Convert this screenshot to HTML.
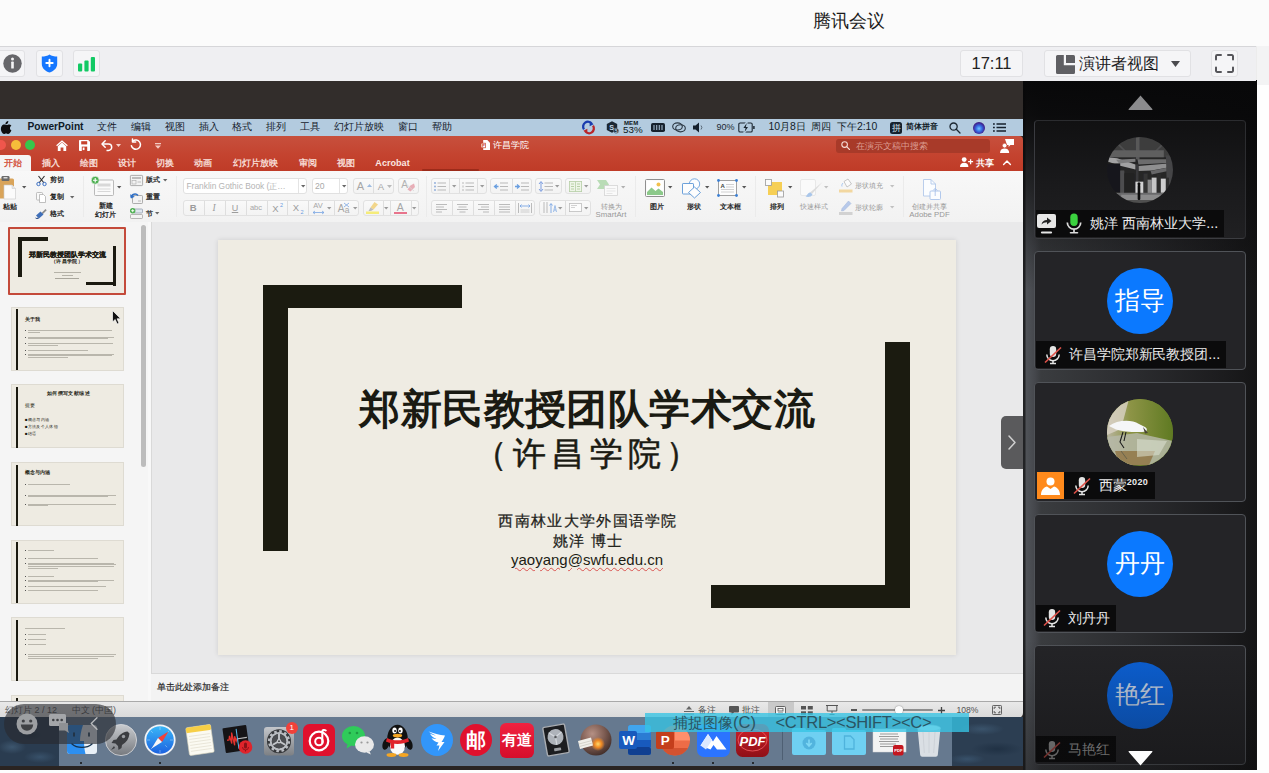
<!DOCTYPE html>
<html lang="zh">
<head>
<meta charset="utf-8">
<title>腾讯会议</title>
<style>
*{box-sizing:border-box;margin:0;padding:0}
html,body{width:1269px;height:773px;overflow:hidden;background:#fcfcfc}
body{position:relative;font-family:"Liberation Sans",sans-serif;color:#111}
.abs,.abs-c>*{position:absolute}
.nw{white-space:nowrap}
svg{display:block;overflow:visible}
/* ---------- Tencent Meeting chrome ---------- */
#titlebar{left:0;top:0;width:1269px;height:46px;background:#fbfbfb}
#titlebar .t{left:813px;top:9px;font-size:18px;line-height:24px;color:#1a1a1a;white-space:nowrap}
#toolbar{z-index:3;left:0;top:46px;width:1256px;height:35px;background:#efeff2;border-top:1px solid #d6d6d9}
.tbtn{height:27px;background:#f5f5f7;border:1px solid #e1e1e4;border-radius:3px}
#rightstrip{left:1256px;top:46px;width:13px;height:727px;background:linear-gradient(#f3f3f4 0,#f3f3f4 39px,#fefefe 39px);border-left:1px solid #ececec}
#bottomstrip{left:0;top:770px;width:1269px;height:3px;background:#fdfdfd}
/* ---------- shared screen ---------- */
#share{left:0;top:80px;width:1023px;height:690px;background:#322d2b;overflow:hidden}
#macbar{left:0;top:39px;width:1023px;height:16.5px;background:#b3cbdf;font-size:11px;color:#16202b}
#macbar .mi{top:0;line-height:16.5px;white-space:nowrap;font-size:10.4px;margin-left:1px;transform:translateX(-50%)}
#ppthead{left:0;top:55.5px;width:1023px;height:35.5px;border-radius:0 4px 0 0;background:linear-gradient(#c7503d,#c4432f 55%,#bf3b27)}
#ppthead .tab{top:19px;line-height:16px;font-size:9.1px;color:#fbe6e0;white-space:nowrap;transform:translateX(-50%);-webkit-text-stroke:.25px #fbe6e0}
#ribbon{left:0;top:91px;width:1023px;height:51.5px;background:linear-gradient(#f8f8f8,#f2f2f2);border-bottom:1px solid #d6d6d6}
.rg{background:linear-gradient(#f9f9f9,#f3f3f3);border:1px solid #e1e1e1;border-radius:3px;height:16px}
.rl{font-size:8.5px;line-height:10px;color:#161616;white-space:nowrap;transform:translateX(-50%);text-align:center;-webkit-text-stroke:.25px #161616}
.rl.dim{color:#989898;-webkit-text-stroke:0}
#content{left:0;top:142px;width:1023px;height:479px;background:#e9e9ea}
#thumbs{left:0;top:0;width:151px;height:479px;background:#f5f5f5;overflow:hidden}
.th{left:12px;width:112px;height:63px;background:#eeebe2;border:1px solid #dedbd2}
.th i{position:absolute;display:block;background:#1b1a10}
.th b{position:absolute;display:block;background:#8f8d86;height:1px}
#slide{left:218px;top:18px;width:738px;height:415px;background:#efece3;box-shadow:0 0 5px rgba(0,0,0,.12)}
#slide .blk{background:#1b1b10}
#notes{left:151px;top:451px;width:872px;height:28px;background:#f3f3f3;border-top:1px solid #d9d9d9}
#status{left:0;top:621px;width:1023px;height:17px;background:linear-gradient(#e9e9e9,#d9d9d9);border-top:1px solid #a9a9a9;font-size:10px;color:#555;border-radius:0 0 5px 0}
#desk{left:0;top:637px;width:1023px;height:49px;background:#2a3c50;z-index:0}
#dock{left:59px;top:637px;width:893px;height:49px;background:#66798f}
#deskbot{left:0;top:686px;width:1023px;height:4px;background:#2a2422}
.di{top:646px;width:30px;height:30px}
/* ---------- participants ---------- */
#side{left:1023px;top:80px;width:233.5px;height:690px;background:linear-gradient(to right,#222325 0,#222325 2.2px,#505358 2.8px,#4b4e53 7px,#45474c 12px,#3a3c3f 18px,#2c2d30 45%,#1c1c1e 85%,#151516 100%);overflow:hidden}
.card{left:10.8px;width:212.2px;height:119.5px;border:1.5px solid #505358;border-radius:4px;background:#242427}
.av{left:72px;top:16px;width:66.5px;height:66.5px;border-radius:50%;background:#0b79ff;color:#fff;font-size:24.5px;line-height:66px;text-align:center;white-space:nowrap}
.nm{left:2px;top:91px;height:26.5px;background:#0b0b0c;white-space:nowrap}
</style>
</head>
<body>
<div id="titlebar" class="abs"><div class="t abs">腾讯会议</div></div>
<div id="toolbar" class="abs">
  <div class="tbtn abs" style="left:-3px;top:3px;width:28px">
    <svg class="abs" style="left:5px;top:3px" width="19" height="19" viewBox="0 0 19 19"><circle cx="9.5" cy="9.5" r="9.2" fill="#66666a"/><circle cx="9.5" cy="5" r="1.5" fill="#f4f4f6"/><rect x="8.2" y="7.6" width="2.6" height="7" rx=".6" fill="#f4f4f6"/></svg>
  </div>
  <div class="tbtn abs" style="left:36px;top:3px;width:27px">
    <svg class="abs" style="left:4px;top:3px" width="17" height="19" viewBox="0 0 17 19"><path d="M8.5 .6C6.6 2.1 3.6 2.6.8 2.6v7.1c0 4.6 3.4 7.3 7.7 8.8 4.3-1.500 7.700-4.200 7.700-8.800V2.600C13.400 2.600 10.400 2.100 8.500.600z" fill="#1677ff"/><path d="M8.500 5.800v6.400M5.300 9h6.400" stroke="#fff" stroke-width="1.900" stroke-linecap="round"/></svg>
  </div>
  <div class="tbtn abs" style="left:73px;top:3px;width:27px">
    <svg class="abs" style="left:4px;top:6px" width="18" height="15" viewBox="0 0 18 15"><rect x="0" y="6.6" width="4.2" height="8" rx="1" fill="#12c964"/><rect x="6.4" y="3.6" width="4.2" height="11" rx="1" fill="#12c964"/><rect x="12.8" y="0" width="4.2" height="14.600" rx="1" fill="#12c964"/></svg>
  </div>
  <div class="tbtn abs nw" style="left:960px;top:3px;width:63px;font-size:16.500px;line-height:25px;text-align:center;color:#222">17:11</div>
  <div class="tbtn abs" style="left:1044px;top:3px;width:147px">
    <svg class="abs" style="left:11px;top:4px" width="19" height="19" viewBox="0 0 19 19"><path d="M1.500 0h6.300v10.300H19v7.200a1.500 1.500 0 0 1-1.500 1.500h-16A1.500 1.500 0 0 1 0 17.500v-16A1.500 1.500 0 0 1 1.500 0z" fill="#5f5f63"/><path d="M10 0h7.500A1.500 1.500 0 0 1 19 1.500V8h-9z" fill="#5f5f63"/></svg>
    <div class="abs nw" style="left:34px;top:0;font-size:16px;line-height:25px;color:#1d1d1f">演讲者视图</div>
    <svg class="abs" style="left:126px;top:10px" width="9" height="6" viewBox="0 0 9 6"><path d="M0 0h9L4.500 6z" fill="#4a4a4e"/></svg>
  </div>
  <div class="tbtn abs" style="left:1211px;top:3px;width:27px">
    <svg class="abs" style="left:3px;top:3px" width="19" height="19" viewBox="0 0 19 19" fill="none" stroke="#55555a" stroke-width="2" stroke-linecap="round" stroke-linejoin="round"><path d="M1 5.500V2.200A1.200 1.200 0 0 1 2.200 1H6M13 1h3.800A1.200 1.200 0 0 1 18 2.200V5.500M18 13.500v3.300a1.200 1.200 0 0 1-1.200 1.200H13M6 18H2.200A1.200 1.200 0 0 1 1 16.800V13.500"/></svg>
  </div>
</div>
<div id="rightstrip" class="abs"></div>
<div id="share" class="abs">
<div id="macbar" class="abs">
  <svg class="abs" style="left:1px;top:2px" width="11" height="13" viewBox="0 0 11 13"><path d="M7.300 0c.100 1-.300 1.800-.800 2.400-.600.600-1.300 1-2.100.900-.100-.900.300-1.700.800-2.300C5.800.400 6.600 0 7.300 0zM10.400 9.300c-.300.800-.700 1.500-1.200 2.200-.500.700-1.100 1.500-2 1.500-.800 0-1.100-.500-2.100-.500s-1.300.500-2.100.500c-.900 0-1.500-.800-2-1.500C-.300 9.500-.600 6.500.700 4.900c.700-.900 1.700-1.400 2.600-1.400 1 0 1.600.500 2.400.500s1.300-.500 2.400-.500c.800 0 1.700.400 2.300 1.200-2 1.100-1.700 4 0 4.600z" fill="#0d0d0f"/></svg>
  <div class="mi abs" style="left:54.5px;font-weight:bold;font-size:10.2px;color:#0e1a26">PowerPoint</div>
  <div class="mi abs" style="left:106px">文件</div>
  <div class="mi abs" style="left:140px">编辑</div>
  <div class="mi abs" style="left:174px">视图</div>
  <div class="mi abs" style="left:207.5px">插入</div>
  <div class="mi abs" style="left:241px">格式</div>
  <div class="mi abs" style="left:275px">排列</div>
  <div class="mi abs" style="left:309px">工具</div>
  <div class="mi abs" style="left:358px">幻灯片放映</div>
  <div class="mi abs" style="left:407px">窗口</div>
  <div class="mi abs" style="left:441px">帮助</div>
  <!-- right status items -->
  <svg class="abs" style="left:582px;top:2px" width="13" height="13" viewBox="0 0 13 13" fill="none" stroke-width="2.300"><path d="M2 8.300A4.700 4.700 0 0 1 9.800 2.800" stroke="#1a3cae"/><path d="M11 4.700A4.700 4.700 0 0 1 3.200 10.200" stroke="#b9262a"/><path d="M7.800 .300 11.600 3.300 7.600 5.200z" fill="#1a3cae" stroke="none"/><path d="M5.200 12.700 1.400 9.700 5.400 7.800z" fill="#b9262a" stroke="none"/></svg>
  <svg class="abs" style="left:606px;top:2px" width="13" height="13" viewBox="0 0 13 13"><path d="M6 .300 11.200 3.100v5.800L6 11.700.800 8.900V3.100z" fill="#1b2733"/><text x="3.300" y="8.700" font-size="7.200" font-weight="bold" fill="#c4d8e8" font-family="Liberation Sans">S</text><circle cx="10.200" cy="9.800" r="2.600" fill="#1b2733" stroke="#b3cbdf" stroke-width=".5"/><text x="8.900" y="11.500" font-size="4.500" font-weight="bold" fill="#c4d8e8" font-family="Liberation Sans">5</text></svg>
  <div class="abs nw" style="left:624px;top:1px;font-size:6px;line-height:6px;font-weight:bold;color:#0e1720;letter-spacing:.1px">MEM</div>
  <div class="abs nw" style="left:623px;top:6px;font-size:9.800px;line-height:10px;color:#0e1720">53%</div>
  <svg class="abs" style="left:651px;top:4px" width="14" height="9" viewBox="0 0 14 9"><rect x="0" y="0" width="14" height="9" rx="1.800" fill="#16212d"/><path d="M3 2v5M5.700 2v5M8.300 2v5M11 2v5" stroke="#9fb6c9" stroke-width="1.100"/></svg>
  <svg class="abs" style="left:672px;top:3px" width="14" height="11" viewBox="0 0 14 11" fill="none" stroke="#2a3642" stroke-width="1.100"><ellipse cx="5.500" cy="4.500" rx="4.800" ry="3.600"/><ellipse cx="8.500" cy="6.300" rx="4.800" ry="3.600"/></svg>
  <svg class="abs" style="left:693px;top:3px" width="12" height="11" viewBox="0 0 12 11"><path d="M0 3.500h2.500L6 .500v10L2.500 7.500H0z" fill="#16212d"/><path d="M8 3.500a3 3 0 0 1 0 4" stroke="#5a6a78" stroke-width="1" fill="none"/></svg>
  <div class="abs nw" style="left:716.500px;top:0;font-size:9px;line-height:16.500px;color:#1c2732">90%</div>
  <svg class="abs" style="left:738px;top:3px" width="17" height="11" viewBox="0 0 17 11" fill="none" stroke="#1c2732" stroke-width="1.100"><rect x=".8" y="1" width="13.400" height="9" rx="1.300"/><path d="M15.900 4v3" stroke-width="1.500"/><path d="M9 -.300 4.600 6.300h2.600L6 11.300 10.400 4.700H7.800z" fill="#b3cbdf" stroke="#b3cbdf" stroke-width="1.600"/><path d="M8.800 .900 5.400 6h2.200L6.600 10.100 10 4.900H7.800z" fill="#1c2732" stroke="none"/></svg>
  <div class="abs nw" style="left:768.500px;top:0;font-size:10.450px;line-height:16.500px;color:#121c27;word-spacing:2.600px">10月8日 周四 下午2:10</div>
  <div class="abs" style="left:890px;top:2.500px;width:12px;height:12px;border-radius:2.500px;background:#15202c;color:#d9e6f1;font-size:8.500px;line-height:12px;text-align:center">拼</div>
  <div class="abs nw" style="left:905.500px;top:0;font-size:8px;line-height:16.500px;color:#121c27;font-weight:bold">简体拼音</div>
  <svg class="abs" style="left:949px;top:3px" width="12" height="12" viewBox="0 0 12 12" fill="none" stroke="#1c2732" stroke-width="1.300"><circle cx="4.600" cy="4.600" r="3.600"/><path d="M7.300 7.300 11 11" stroke-linecap="round"/></svg>
  <div class="abs" style="left:972.500px;top:2.500px;width:12px;height:12px;border-radius:50%;background:radial-gradient(circle at 50% 55%,#6ec6ff 0,#3567e0 35%,#40208e 65%,#161038 100%)"></div>
  <svg class="abs" style="left:993px;top:4px" width="13" height="9" viewBox="0 0 13 9" stroke="#16212d" stroke-width="1.500"><path d="M0 1h1.800M3.500 1H13M0 4.500h1.800M3.500 4.500H13M0 8h1.800M3.500 8H13"/></svg>
</div>
<div id="ppthead" class="abs">
  <!-- traffic lights -->
  <div class="abs" style="left:-4px;top:4.500px;width:10px;height:10px;border-radius:50%;background:#f0564c"></div>
  <div class="abs" style="left:10.500px;top:4.500px;width:10px;height:10px;border-radius:50%;background:#f6bd3a"></div>
  <div class="abs" style="left:25px;top:4.500px;width:10px;height:10px;border-radius:50%;background:#37c64b"></div>
  <!-- quick access -->
  <svg class="abs" style="left:55.500px;top:4px" width="12" height="11" viewBox="0 0 12 11"><path d="M6 .300.200 5.300l.800.900L6 1.900l5 4.300.800-.900z" fill="#fff"/><path d="M1.800 6.200 6 2.600l4.200 3.600V11H7.400V7.600H4.600V11H1.800z" fill="#fff"/></svg>
  <svg class="abs" style="left:79px;top:4px" width="11" height="11" viewBox="0 0 11 11"><path d="M.800 0h8.400L11 1.800v8.400a.800.800 0 0 1-.800.800H.800a.800.800 0 0 1-.800-.800V.800A.800.800 0 0 1 .800 0z" fill="#fff"/><rect x="2.200" y="1.200" width="6" height="3.200" fill="#c6422d"/><rect x="2.800" y="6.600" width="5.400" height="4.400" fill="#c6422d"/><rect x="3.700" y="7.500" width="1.800" height="2.600" fill="#fff"/></svg>
  <svg class="abs" style="left:101px;top:4px" width="12" height="11" viewBox="0 0 12 11" fill="none" stroke="#fff" stroke-width="1.500"><path d="M1.200 4h6.300a3.200 3.200 0 0 1 0 6.400H5.500"/><path d="M4.200.800 1 4l3.200 3.200" stroke-linejoin="round" stroke-linecap="round"/></svg>
  <svg class="abs" style="left:116px;top:8.500px" width="5" height="3" viewBox="0 0 5 3"><path d="M0 0h5L2.500 3z" fill="#f6d3cc"/></svg>
  <svg class="abs" style="left:129.500px;top:3.500px" width="12" height="12" viewBox="0 0 12 12" fill="none" stroke="#fff" stroke-width="1.500"><path d="M2.700 2.300A4.600 4.600 0 1 1 1.400 6.800" stroke-linecap="round"/><path d="M5.700 2.900H2.500V-.100" stroke-linejoin="round" stroke-linecap="round"/></svg>
  <svg class="abs" style="left:155px;top:7px" width="6" height="6" viewBox="0 0 6 6"><path d="M0 0h6v1.200H0zM0 2.600h6L3 5.800z" fill="#f3c9c1"/></svg>
  <!-- document title -->
  <svg class="abs" style="left:481px;top:4.500px" width="9" height="10" viewBox="0 0 9 10"><path d="M2.200 0H6.300L9 2.700V10H2.200z" fill="#fff"/><rect x="0" y="3.200" width="4.600" height="4.600" fill="#fff" stroke="#c6422d" stroke-width=".7"/><text x=".9" y="7.200" font-size="4.400" font-weight="bold" fill="#c6422d" font-family="Liberation Sans">P</text></svg>
  <div class="abs nw" style="left:493px;top:2px;font-size:9.300px;line-height:15px;color:#fff">许昌学院</div>
  <!-- search -->
  <div class="abs" style="left:835.500px;top:3px;width:154px;height:14px;border-radius:3px;background:#a83a29">
    <svg class="abs" style="left:5px;top:2.500px" width="9" height="9" viewBox="0 0 9 9" fill="none" stroke="#f7dcd6" stroke-width="1.100"><circle cx="3.600" cy="3.600" r="2.800"/><path d="M5.700 5.700 8.500 8.500" stroke-linecap="round"/></svg>
    <div class="abs nw" style="left:20px;top:0;font-size:8.700px;line-height:14px;color:#dc9d91">在演示文稿中搜索</div>
  </div>
  <svg class="abs" style="left:1000px;top:3px" width="14" height="14" viewBox="0 0 14 14"><path d="M5 0h9v6h-3.600L8.600 8V6H7z" fill="#fff"/><circle cx="4.600" cy="6.600" r="2.300" fill="#fff" stroke="#c6422d" stroke-width=".6"/><path d="M0 14c0-3 2-4.400 4.600-4.400S9.200 11 9.200 14z" fill="#fff"/></svg>
  <!-- tabs -->
  <div class="abs" style="left:0;top:19px;width:31px;height:16px;background:#f5f5f5;border-radius:0 3px 0 0"></div>
  <div class="tab abs" style="left:13px;color:#d2462f;-webkit-text-stroke:.25px #d2462f">开始</div>
  <div class="tab abs" style="left:50.500px">插入</div>
  <div class="tab abs" style="left:88.500px">绘图</div>
  <div class="tab abs" style="left:126.500px">设计</div>
  <div class="tab abs" style="left:165px">切换</div>
  <div class="tab abs" style="left:203px">动画</div>
  <div class="tab abs" style="left:255.500px">幻灯片放映</div>
  <div class="tab abs" style="left:308px">审阅</div>
  <div class="tab abs" style="left:346px">视图</div>
  <div class="tab abs" style="left:392.500px;font-weight:bold;-webkit-text-stroke:0">Acrobat</div>
  <div class="abs" style="left:422px;top:33px;width:57px;height:2px;background:#932717;border-radius:1px;opacity:.8"></div>
  <!-- share -->
  <svg class="abs" style="left:960px;top:21.500px" width="13" height="10" viewBox="0 0 13 10"><circle cx="4.200" cy="2.600" r="2.400" fill="#fff"/><path d="M0 10c0-3 1.800-4.300 4.200-4.300S8.400 7 8.400 10z" fill="#fff"/><path d="M10.600 2.200v5M8.100 4.700h5" stroke="#fff" stroke-width="1.300"/></svg>
  <div class="abs nw" style="left:976px;top:19px;font-size:9px;line-height:16px;color:#fff;font-weight:bold">共享</div>
  <svg class="abs" style="left:1003px;top:24px" width="8" height="5" viewBox="0 0 8 5" fill="none" stroke="#fff" stroke-width="1.400"><path d="M.600 4.400 4 1l3.400 3.400" stroke-linecap="round" stroke-linejoin="round"/></svg>
</div>
<div id="ribbon" class="abs">
<svg class="abs" style="left:-3px;top:5px" width="19" height="23" viewBox="0 0 19 23"><rect x="0" y="2.500" width="17" height="20" rx="1.500" fill="#d9a45a"/><rect x="4.500" y="0" width="8" height="5" rx="1.200" fill="#6b6b6b"/><rect x="6.500" y="1" width="4" height="1.500" fill="#d9d9d9"/><path d="M7 9h8l3.500 3.500V23H7z" fill="#fbfbfb" stroke="#c9c9c9" stroke-width=".6"/><path d="M15 9v3.500h3.500" fill="#e6e6e6" stroke="#c9c9c9" stroke-width=".5"/></svg>
<svg class="abs" style="left:21.8px;top:15.2px" width="4.4" height="2.6" viewBox="0 0 5 3"><path d="M0 0h5L2.500 3z" fill="#555"/></svg>
<div class="rl abs " style="left:10.3px;top:31.30000000000001px;font-size:7.4px">粘贴</div>
<svg class="abs" style="left:35.5px;top:4.5px" width="11" height="10" viewBox="0 0 11 10"><path d="M2.500 0 8 7M8.500 0 3 7" stroke="#333" stroke-width="1.200" fill="none"/><circle cx="2.500" cy="8" r="1.700" fill="none" stroke="#3a6fc4" stroke-width="1"/><circle cx="8.500" cy="8" r="1.700" fill="none" stroke="#3a6fc4" stroke-width="1"/></svg>
<div class="rl abs " style="left:50.3px;top:4.300000000000011px;font-size:7.4px;transform:none">剪切</div>
<svg class="abs" style="left:36px;top:21px" width="10" height="11" viewBox="0 0 10 11"><rect x=".5" y=".5" width="6" height="7.500" rx=".8" fill="#fafafa" stroke="#b0b0b0" stroke-width=".8"/><path d="M3.500 2.500h4L9.500 4.500V10.500H3.500z" fill="#fff" stroke="#b0b0b0" stroke-width=".8"/></svg>
<div class="rl abs " style="left:50.3px;top:21px;font-size:7.4px;transform:none">复制</div>
<svg class="abs" style="left:69.8px;top:24.899999999999988px" width="4.4" height="2.6" viewBox="0 0 5 3"><path d="M0 0h5L2.500 3z" fill="#666"/></svg>
<svg class="abs" style="left:35px;top:37.5px" width="12" height="10" viewBox="0 0 12 10"><path d="M6.500 4 10.500 0l1.200 1.200L7.700 5.200z" fill="#8a8a8a"/><path d="M1 6.500 5.500 2.500l3 3L4 9.500z" fill="#3f6fb8"/><path d="M0 8.500c1 .5 2.200.5 3 0l1 1C3 10.300 1 10.300 0 8.500z" fill="#2c4e87"/></svg>
<div class="rl abs " style="left:50.3px;top:37.5px;font-size:7.4px;transform:none">格式</div>
<div class="abs" style="left:83px;top:5px;width:1px;height:41px;background:#ebebeb"></div>
<svg class="abs" style="left:90.5px;top:5px" width="23" height="20" viewBox="0 0 23 20"><rect x="3.500" y="4" width="19" height="15.500" rx="1" fill="#fafafa" stroke="#a9a9a9" stroke-width=".8"/><rect x="6.500" y="7.500" width="13" height="3" fill="#d8d8d8"/><path d="M6.500 13h13M6.500 15.500h13" stroke="#cfcfcf" stroke-width=".8"/><circle cx="4.200" cy="4.200" r="4" fill="#4caf50" stroke="#f5f5f5" stroke-width=".7"/><path d="M4.200 2v4.400M2 4.200h4.400" stroke="#fff" stroke-width="1.100"/></svg>
<svg class="abs" style="left:117.3px;top:15.2px" width="4.4" height="2.6" viewBox="0 0 5 3"><path d="M0 0h5L2.500 3z" fill="#555"/></svg>
<div class="rl abs " style="left:105.5px;top:30.400000000000006px;font-size:7.4px">新建</div>
<div class="rl abs " style="left:105.5px;top:39px;font-size:7.4px">幻灯片</div>
<svg class="abs" style="left:129.5px;top:4px" width="13" height="11" viewBox="0 0 13 11"><rect x=".4" y=".4" width="12.200" height="10.200" rx=".8" fill="#f3f3f3" stroke="#9a9a9a" stroke-width=".8"/><rect x="2" y="2" width="9" height="2" fill="#bdbdbd"/><rect x="2" y="5.500" width="4" height="3.500" fill="none" stroke="#a9a9a9" stroke-width=".6"/><path d="M7.500 7h3.500" stroke="#a9a9a9" stroke-width=".7"/></svg>
<div class="rl abs " style="left:146px;top:4.300000000000011px;font-size:7.4px;transform:none">版式</div>
<svg class="abs" style="left:163.4px;top:8.00000000000001px" width="4.4" height="2.6" viewBox="0 0 5 3"><path d="M0 0h5L2.500 3z" fill="#666"/></svg>
<svg class="abs" style="left:129.5px;top:20.5px" width="13" height="12" viewBox="0 0 13 12"><rect x="2.500" y="3.500" width="10" height="8" rx=".8" fill="#f3f3f3" stroke="#9a9a9a" stroke-width=".8"/><path d="M8 9h3" stroke="#a9a9a9" stroke-width=".8"/><path d="M1.200 5.500A3.800 3.800 0 0 1 8 3.500" fill="none" stroke="#2f6fc6" stroke-width="1.500"/><path d="M0 2.200 1 6.500 4.800 4.800z" fill="#2f6fc6"/></svg>
<div class="rl abs " style="left:146px;top:21px;font-size:7.4px;transform:none">重置</div>
<svg class="abs" style="left:129.5px;top:37px" width="13" height="11" viewBox="0 0 13 11"><rect x="3.500" y="1" width="9" height="4" rx=".8" fill="#dfe6ef" stroke="#8a97a8" stroke-width=".7"/><rect x=".5" y="6.500" width="12" height="4" rx=".8" fill="#f3f3f3" stroke="#9a9a9a" stroke-width=".7"/><circle cx="2.700" cy="2.700" r="2.700" fill="#4caf50"/><path d="M2.700 1.200v3M1.200 2.700h3" stroke="#fff" stroke-width=".9"/></svg>
<div class="rl abs " style="left:146px;top:37.5px;font-size:7.4px;transform:none">节</div>
<svg class="abs" style="left:155.3px;top:41.39999999999999px" width="4.4" height="2.6" viewBox="0 0 5 3"><path d="M0 0h5L2.500 3z" fill="#666"/></svg>
<div class="abs" style="left:176px;top:5px;width:1px;height:41px;background:#ebebeb"></div>
<div class="rg abs" style="left:183px;top:7px;width:124px;height:15.5px;background:#fff"></div>
<div class="rl abs" style="left:186.5px;top:10px;font-size:8.4px;color:#b4b4b4;-webkit-text-stroke:0;transform:none">Franklin Gothic Book (正…</div>
<div class="abs" style="left:297.5px;top:8px;width:1px;height:13.5px;background:#e4e4e4"></div>
<svg class="abs" style="left:300.6px;top:13.7px" width="4.4" height="2.6" viewBox="0 0 5 3"><path d="M0 0h5L2.500 3z" fill="#666"/></svg>
<div class="rg abs" style="left:311.5px;top:7px;width:36.5px;height:15.5px;background:#fff"></div>
<div class="rl abs " style="left:315px;top:10px;font-size:8.6px;color:#a9a9a9;-webkit-text-stroke:0;transform:none">20</div>
<div class="abs" style="left:339px;top:8px;width:1px;height:13.5px;background:#e4e4e4"></div>
<svg class="abs" style="left:341.6px;top:13.7px" width="4.4" height="2.6" viewBox="0 0 5 3"><path d="M0 0h5L2.500 3z" fill="#666"/></svg>
<div class="rg abs" style="left:352.5px;top:7px;width:41.5px;height:15.5px;"></div>
<div class="abs" style="left:373px;top:8px;width:1px;height:13.5px;background:#dedede"></div>
<div class="abs nw" style="left:360.5px;top:9px;line-height:12px;font-size:11px;color:#a6a6a6;transform:translateX(-50%);">A</div>
<svg class="abs" style="left:366.5px;top:12.5px" width="5" height="3" viewBox="0 0 5 3"><path d="M0 3h5L2.500 0z" fill="#9dbbe0"/></svg>
<div class="abs nw" style="left:381px;top:9.5px;line-height:12px;font-size:9.5px;color:#a6a6a6;transform:translateX(-50%);">A</div>
<svg class="abs" style="left:386.5px;top:14px" width="5" height="3" viewBox="0 0 5 3"><path d="M0 0h5L2.500 3z" fill="#b9b9b9"/></svg>
<div class="rg abs" style="left:397.5px;top:7px;width:21.0px;height:15.5px;"></div>
<div class="abs nw" style="left:404.5px;top:7.5px;line-height:12px;font-size:10px;color:#b0b0b0;transform:translateX(-50%);">A</div>
<svg class="abs" style="left:405px;top:11px" width="10" height="10" viewBox="0 0 10 10"><path d="M5.500 3.500 9 1.500 10 5 5.500 9.500 2.500 7.500z" fill="#e7a6b0" opacity=".9"/><path d="M0 1l9 8" stroke="#d8d8d8" stroke-width=".8"/></svg>
<div class="rg abs" style="left:183px;top:29px;width:176px;height:15.5px;"></div>
<div class="abs" style="left:203.5px;top:30px;width:1px;height:13.5px;background:#dedede"></div>
<div class="abs" style="left:224.5px;top:30px;width:1px;height:13.5px;background:#dedede"></div>
<div class="abs" style="left:245.5px;top:30px;width:1px;height:13.5px;background:#dedede"></div>
<div class="abs" style="left:266.5px;top:30px;width:1px;height:13.5px;background:#dedede"></div>
<div class="abs" style="left:287px;top:30px;width:1px;height:13.5px;background:#dedede"></div>
<div class="abs" style="left:308px;top:30px;width:1px;height:13.5px;background:#dedede"></div>
<div class="abs" style="left:333.5px;top:30px;width:1px;height:13.5px;background:#dedede"></div>
<div class="abs nw" style="left:193.3px;top:31px;line-height:12px;font-size:9.5px;color:#9c9c9c;transform:translateX(-50%);font-weight:bold">B</div>
<div class="abs nw" style="left:214px;top:31px;line-height:12px;font-size:9.5px;color:#9c9c9c;transform:translateX(-50%);font-style:italic;font-family:'Liberation Serif',serif">I</div>
<div class="abs nw" style="left:235px;top:31px;line-height:12px;font-size:9px;color:#9c9c9c;transform:translateX(-50%);text-decoration:underline">U</div>
<div class="abs nw" style="left:256px;top:31px;line-height:12px;font-size:7.5px;color:#a6a6a6;transform:translateX(-50%);">abc</div>
<div class="abs nw" style="left:275.5px;top:32px;line-height:12px;font-size:9.5px;color:#9c9c9c;transform:translateX(-50%);">X</div>
<div class="abs nw" style="left:281.5px;top:28px;line-height:12px;font-size:5.5px;color:#6b9be0;transform:translateX(-50%);">2</div>
<div class="abs nw" style="left:296px;top:30.5px;line-height:12px;font-size:9.5px;color:#9c9c9c;transform:translateX(-50%);">X</div>
<div class="abs nw" style="left:302px;top:34.5px;line-height:12px;font-size:5.5px;color:#6b9be0;transform:translateX(-50%);">2</div>
<div class="abs nw" style="left:318px;top:28.5px;line-height:12px;font-size:7.5px;color:#a6a6a6;transform:translateX(-50%);">AV</div>
<svg class="abs" style="left:312.5px;top:40px" width="11" height="3" viewBox="0 0 11 3"><path d="M0 1.500h11M2 0 0 1.500 2 3M9 0l2 1.500L9 3" fill="none" stroke="#7aa6e3" stroke-width=".8"/></svg>
<svg class="abs" style="left:326.8px;top:35.7px" width="4.4" height="2.6" viewBox="0 0 5 3"><path d="M0 0h5L2.500 3z" fill="#9a9a9a"/></svg>
<div class="abs nw" style="left:341px;top:31.5px;line-height:12px;font-size:10px;color:#a6a6a6;transform:translateX(-50%);">A</div>
<div class="abs nw" style="left:347px;top:32.5px;line-height:12px;font-size:8.5px;color:#a6a6a6;transform:translateX(-50%);">a</div>
<svg class="abs" style="left:343.5px;top:31.5px" width="5" height="4" viewBox="0 0 5 4"><path d="M0 0 5 4M5 0 0 4" stroke="#7aa6e3" stroke-width=".8"/></svg>
<svg class="abs" style="left:352.8px;top:35.7px" width="4.4" height="2.6" viewBox="0 0 5 3"><path d="M0 0h5L2.500 3z" fill="#9a9a9a"/></svg>
<div class="rg abs" style="left:363px;top:29px;width:55.5px;height:15.5px;"></div>
<div class="abs" style="left:382.5px;top:30px;width:1px;height:13.5px;background:#dedede"></div>
<div class="abs" style="left:390px;top:30px;width:1px;height:13.5px;background:#dedede"></div>
<div class="abs" style="left:410.5px;top:30px;width:1px;height:13.5px;background:#dedede"></div>
<svg class="abs" style="left:366px;top:31px" width="14" height="12" viewBox="0 0 14 12"><path d="M8.500 0 12 2.500 7.500 7.500 4.500 5.500z" fill="#f2d68b"/><path d="M4.500 5.500 7.500 7.500 5 9H2.500z" fill="#bdbdbd"/><rect x="0" y="9.500" width="13" height="2.500" fill="#f5ec7a"/></svg>
<svg class="abs" style="left:384.1px;top:35.7px" width="4.4" height="2.6" viewBox="0 0 5 3"><path d="M0 0h5L2.500 3z" fill="#9a9a9a"/></svg>
<div class="abs nw" style="left:400.3px;top:29.5px;line-height:12px;font-size:10.5px;color:#a6a6a6;transform:translateX(-50%);">A</div>
<div class="abs" style="left:394px;top:40.5px;width:13px;height:2.500px;background:#e8748c"></div>
<svg class="abs" style="left:412.3px;top:35.7px" width="4.4" height="2.6" viewBox="0 0 5 3"><path d="M0 0h5L2.500 3z" fill="#9a9a9a"/></svg>
<div class="abs" style="left:425.5px;top:5px;width:1px;height:41px;background:#ebebeb"></div>
<div class="rg abs" style="left:431px;top:7px;width:55.5px;height:15.5px;"></div>
<div class="abs" style="left:449px;top:8px;width:1px;height:13.5px;background:#dedede"></div>
<div class="abs" style="left:458.5px;top:8px;width:1px;height:13.5px;background:#dedede"></div>
<div class="abs" style="left:477px;top:8px;width:1px;height:13.5px;background:#dedede"></div>
<svg class="abs" style="left:434px;top:10.5px" width="12" height="9" viewBox="0 0 12 9"><circle cx="1" cy="1" r=".9" fill="#8aa9d8"/><circle cx="1" cy="4.500" r=".9" fill="#8aa9d8"/><circle cx="1" cy="8" r=".9" fill="#8aa9d8"/><path d="M3.500 1H12M3.500 4.500H12M3.500 8H12" stroke="#b9b9b9" stroke-width="1"/></svg>
<svg class="abs" style="left:451.6px;top:13.7px" width="4.4" height="2.6" viewBox="0 0 5 3"><path d="M0 0h5L2.500 3z" fill="#9a9a9a"/></svg>
<svg class="abs" style="left:462px;top:10.5px" width="12" height="9" viewBox="0 0 12 9"><path d="M3.500 1H12M3.500 4.500H12M3.500 8H12" stroke="#b9b9b9" stroke-width="1"/><path d="M1 0v2M1 3.500v2M1 7v2" stroke="#a9a9a9" stroke-width=".8"/></svg>
<svg class="abs" style="left:479.6px;top:13.7px" width="4.4" height="2.6" viewBox="0 0 5 3"><path d="M0 0h5L2.500 3z" fill="#9a9a9a"/></svg>
<div class="rg abs" style="left:490px;top:7px;width:41.5px;height:15.5px;"></div>
<div class="abs" style="left:511.5px;top:8px;width:1px;height:13.5px;background:#dedede"></div>
<svg class="abs" style="left:494px;top:10.5px" width="14" height="9" viewBox="0 0 14 9"><path d="M6 1h8M6 4.500h8M6 8h8" stroke="#b9b9b9" stroke-width="1"/><path d="M4.500 4.500H1M2.800 2.500 0.500 4.500l2.300 2" fill="none" stroke="#6a9fe0" stroke-width="1.300"/></svg>
<svg class="abs" style="left:514.5px;top:10.5px" width="14" height="9" viewBox="0 0 14 9"><path d="M6 1h8M6 4.500h8M6 8h8" stroke="#b9b9b9" stroke-width="1"/><path d="M0 4.500h3.800M2 2.500l2.300 2-2.300 2" fill="none" stroke="#6a9fe0" stroke-width="1.300"/></svg>
<div class="rg abs" style="left:535px;top:7px;width:26.5px;height:15.5px;"></div>
<svg class="abs" style="left:539px;top:9.5px" width="14" height="11" viewBox="0 0 14 11"><path d="M5.500 2H14M5.500 5.500H14M5.500 9H14" stroke="#b9b9b9" stroke-width="1"/><path d="M2 1v9M0 3 2 .500 4 3M0 8l2 2.500L4 8" fill="none" stroke="#7f9fe0" stroke-width="1"/></svg>
<svg class="abs" style="left:554.8px;top:13.7px" width="4.4" height="2.6" viewBox="0 0 5 3"><path d="M0 0h5L2.500 3z" fill="#9a9a9a"/></svg>
<div class="rg abs" style="left:565px;top:7px;width:26px;height:15.5px;"></div>
<svg class="abs" style="left:569px;top:9.5px" width="13" height="11" viewBox="0 0 13 11"><rect x=".4" y=".4" width="12.200" height="10.200" fill="#eef5e8" stroke="#b6cfa6" stroke-width=".8"/><path d="M6.500 .400v10.200" stroke="#b6cfa6" stroke-width=".8"/><path d="M2 3h3M2 5.500h3M2 8h3M8 3h3M8 5.500h3M8 8h3" stroke="#a9c795" stroke-width=".8"/></svg>
<svg class="abs" style="left:584.3px;top:13.7px" width="4.4" height="2.6" viewBox="0 0 5 3"><path d="M0 0h5L2.500 3z" fill="#9a9a9a"/></svg>
<div class="rg abs" style="left:431px;top:29px;width:104px;height:15.5px;"></div>
<div class="abs" style="left:452.3px;top:30px;width:1px;height:13.5px;background:#dedede"></div>
<div class="abs" style="left:473.4px;top:30px;width:1px;height:13.5px;background:#dedede"></div>
<div class="abs" style="left:494px;top:30px;width:1px;height:13.5px;background:#dedede"></div>
<div class="abs" style="left:514.8px;top:30px;width:1px;height:13.5px;background:#dedede"></div>
<svg class="abs" style="left:436px;top:32.5px" width="12" height="8" viewBox="0 0 12 8"><path d="M0 .500h11M0 3h8M0 5.500h11M0 8h6" stroke="#b3b3b3" stroke-width=".9"/></svg>
<svg class="abs" style="left:457px;top:32.5px" width="12" height="8" viewBox="0 0 12 8"><path d="M0 .500h11M1.500 3h8M0 5.500h11M2.500 8h6" stroke="#b3b3b3" stroke-width=".9"/></svg>
<svg class="abs" style="left:478px;top:32.5px" width="12" height="8" viewBox="0 0 12 8"><path d="M0 .500h11M3 3h8M0 5.500h11M5 8h6" stroke="#b3b3b3" stroke-width=".9"/></svg>
<svg class="abs" style="left:499px;top:32.5px" width="12" height="8" viewBox="0 0 12 8"><path d="M0 .500h11M0 3h11M0 5.500h11M0 8h11" stroke="#b3b3b3" stroke-width=".9"/></svg>
<svg class="abs" style="left:518px;top:31.5px" width="14" height="10" viewBox="0 0 14 10"><path d="M.500 0v10M13.500 0v10" stroke="#b3b3b3" stroke-width=".9"/><path d="M2 3h10M3.500 1.500 2 3l1.500 1.500M10.500 1.500 12 3l-1.500 1.500" fill="none" stroke="#7aa6e3" stroke-width=".9"/><path d="M2.500 7h9M2.500 9h9" stroke="#c3c3c3" stroke-width=".8"/></svg>
<div class="rg abs" style="left:539px;top:29px;width:52px;height:15.5px;"></div>
<div class="abs" style="left:565px;top:30px;width:1px;height:13.5px;background:#dedede"></div>
<svg class="abs" style="left:543px;top:31px" width="14" height="11" viewBox="0 0 14 11"><path d="M1 0v11M4 0v11" stroke="#b3b3b3" stroke-width=".9"/><path d="M8 11V2M6.500 3.500 8 1.500 9.500 3.500" fill="none" stroke="#7aa6e3" stroke-width=".9"/><path d="M10.500 10 12 3.500 13.500 10M11 8h2" fill="none" stroke="#7aa6e3" stroke-width=".7"/></svg>
<svg class="abs" style="left:558.3px;top:35.7px" width="4.4" height="2.6" viewBox="0 0 5 3"><path d="M0 0h5L2.500 3z" fill="#9a9a9a"/></svg>
<svg class="abs" style="left:569px;top:32px" width="13" height="9" viewBox="0 0 13 9"><rect x=".4" y=".4" width="12" height="8.200" fill="#fcfcfc" stroke="#bdbdbd" stroke-width=".8"/><path d="M2 2.500h6M2 4.500h4" stroke="#c6c6c6" stroke-width=".8"/></svg>
<svg class="abs" style="left:584.3px;top:35.7px" width="4.4" height="2.6" viewBox="0 0 5 3"><path d="M0 0h5L2.500 3z" fill="#9a9a9a"/></svg>
<svg class="abs" style="left:597px;top:9px" width="22" height="16" viewBox="0 0 22 16"><path d="M0 0h9l3 4.500L9 9H0l3-4.500z" fill="#b9dcb6"/><rect x="7.500" y="5.500" width="13" height="10" fill="#fafafa" stroke="#cfcfcf" stroke-width=".7"/><path d="M9.500 8.500h9M9.500 11h9M9.500 13.500h6" stroke="#dcdcdc" stroke-width=".7"/></svg>
<svg class="abs" style="left:620.8px;top:15.2px" width="4.4" height="2.6" viewBox="0 0 5 3"><path d="M0 0h5L2.500 3z" fill="#b0b0b0"/></svg>
<div class="rl abs dim" style="left:611px;top:30.80000000000001px;font-size:7.4px">转换为</div>
<div class="rl abs dim" style="left:611px;top:39.400000000000006px;font-size:7.8px">SmartArt</div>
<div class="abs" style="left:634.5px;top:5px;width:1px;height:41px;background:#ebebeb"></div>
<svg class="abs" style="left:644.5px;top:8px" width="20" height="18" viewBox="0 0 20 18"><rect x=".5" y=".5" width="19" height="17" rx="1" fill="#fbfbfb" stroke="#8f8f8f" stroke-width="1"/><rect x="2" y="2" width="16" height="14" fill="#fff"/><path d="M2 16V13l4.500-4.500L10.500 12l3-2.500 4.500 3.500V16z" fill="#8cc98a"/><circle cx="13.500" cy="5.500" r="2" fill="#f2c14e"/></svg>
<svg class="abs" style="left:667.8px;top:15.2px" width="4.4" height="2.6" viewBox="0 0 5 3"><path d="M0 0h5L2.500 3z" fill="#555"/></svg>
<div class="rl abs " style="left:657px;top:31px;font-size:7.4px">图片</div>
<svg class="abs" style="left:682px;top:6.5px" width="20" height="21" viewBox="0 0 20 21"><circle cx="12.500" cy="6" r="5.200" fill="#fbfdff" stroke="#6aa0dc" stroke-width=".9"/><rect x=".5" y="5.500" width="11" height="10.500" rx=".6" fill="#fdfdfd" stroke="#5b96d6" stroke-width=".9"/><path d="M12.500 9 18.500 14.500 12.500 20 6.500 14.500z" fill="#fdfdfd" stroke="#5b96d6" stroke-width=".9"/></svg>
<svg class="abs" style="left:704.8px;top:15.2px" width="4.4" height="2.6" viewBox="0 0 5 3"><path d="M0 0h5L2.500 3z" fill="#555"/></svg>
<div class="rl abs " style="left:693.7px;top:31px;font-size:7.4px">形状</div>
<svg class="abs" style="left:717px;top:7.5px" width="21" height="18" viewBox="0 0 21 18"><rect x="1.500" y="1.500" width="18" height="15" fill="#fdfdfd" stroke="#8a8a8a" stroke-width=".8"/><path d="M9 5.500h8M9 8h8M4 10.500h13M4 13h13" stroke="#bdbdbd" stroke-width=".7"/><text x="3.500" y="8.500" font-size="6" font-weight="bold" fill="#444" font-family="Liberation Sans">A</text><circle cx="1.500" cy="1.500" r="1.400" fill="#3b7fd4"/><circle cx="19.500" cy="1.500" r="1.400" fill="#3b7fd4"/><circle cx="1.500" cy="16.500" r="1.400" fill="#3b7fd4"/><circle cx="19.500" cy="16.500" r="1.400" fill="#3b7fd4"/></svg>
<svg class="abs" style="left:742.3px;top:15.2px" width="4.4" height="2.6" viewBox="0 0 5 3"><path d="M0 0h5L2.500 3z" fill="#555"/></svg>
<div class="rl abs " style="left:730.6px;top:31px;font-size:7.4px">文本框</div>
<div class="abs" style="left:755px;top:5px;width:1px;height:41px;background:#ebebeb"></div>
<svg class="abs" style="left:765px;top:7.5px" width="20" height="19" viewBox="0 0 20 19"><rect x="3" y="3" width="14" height="13" fill="#f6cf55"/><rect x=".4" y=".4" width="6" height="6" fill="#fbfbfb" stroke="#9a9a9a" stroke-width=".8"/><rect x="12.500" y="12" width="6" height="6" fill="#fbfbfb" stroke="#9a9a9a" stroke-width=".8"/></svg>
<svg class="abs" style="left:787.8px;top:15.2px" width="4.4" height="2.6" viewBox="0 0 5 3"><path d="M0 0h5L2.500 3z" fill="#555"/></svg>
<div class="rl abs " style="left:777px;top:31px;font-size:7.4px">排列</div>
<svg class="abs" style="left:800px;top:8px" width="24" height="20" viewBox="0 0 24 20"><rect x=".5" y=".5" width="15" height="16" rx="1.500" fill="#fafafa" stroke="#e3e3e3" stroke-width=".8"/><path d="M22.500 3 12 15l-2-1.500z" fill="#dcdcdc"/><path d="M10.500 13.500c-2.500 0-3 2.500-5 4 2.500 1 6 .5 7-2z" fill="#a9c6ea"/></svg>
<svg class="abs" style="left:823.8px;top:15.2px" width="4.4" height="2.6" viewBox="0 0 5 3"><path d="M0 0h5L2.500 3z" fill="#c0c0c0"/></svg>
<div class="rl abs dim" style="left:814px;top:31px;font-size:7.4px">快速样式</div>
<svg class="abs" style="left:838.5px;top:8px" width="14" height="14" viewBox="0 0 14 14"><path d="M5 2.500 9 0l3.500 5-4.500 3z" fill="#fbfbfb" stroke="#b9b9b9" stroke-width=".8"/><path d="M4 4c-1 1-1.500 2.500-1 3.500" fill="none" stroke="#9cc0ee" stroke-width=".9"/><rect x="0" y="10.500" width="13.500" height="3" fill="#f2d7a0"/></svg>
<div class="rl abs dim" style="left:855px;top:10px;font-size:7.4px;transform:none">形状填充</div>
<svg class="abs" style="left:890.3px;top:13.7px" width="4.4" height="2.6" viewBox="0 0 5 3"><path d="M0 0h5L2.500 3z" fill="#c0c0c0"/></svg>
<svg class="abs" style="left:838.5px;top:29.5px" width="14" height="14" viewBox="0 0 14 14"><path d="M9.500 0 12 2.500 5 9.500 2.500 10 3 7.500z" fill="#b7c9ea" stroke="#9fb3d9" stroke-width=".5"/><rect x="0" y="11" width="13.500" height="3" fill="#d2d2d2"/></svg>
<div class="rl abs dim" style="left:855px;top:31.69999999999999px;font-size:7.4px;transform:none">形状轮廓</div>
<svg class="abs" style="left:890.3px;top:35.39999999999999px" width="4.4" height="2.6" viewBox="0 0 5 3"><path d="M0 0h5L2.500 3z" fill="#c0c0c0"/></svg>
<div class="abs" style="left:903px;top:5px;width:1px;height:41px;background:#ebebeb"></div>
<svg class="abs" style="left:923px;top:8px" width="18" height="21" viewBox="0 0 18 21"><path d="M.5 .5H8L12.500 5V17H.5z" fill="#fbfdff" stroke="#b2c8ea" stroke-width=".9"/><path d="M8 .5V5h4.500" fill="none" stroke="#b2c8ea" stroke-width=".9"/><rect x="7" y="12" width="10.500" height="8.500" rx="1" fill="#fbfdff" stroke="#a9c3ea" stroke-width=".9"/><path d="M12.200 17V9.500M10 11.500l2.200-2.200 2.200 2.200" fill="none" stroke="#a9c3ea" stroke-width=".9"/></svg>
<div class="rl abs dim" style="left:929.5px;top:31px;font-size:7.4px">创建并共享</div>
<div class="rl abs dim" style="left:929.5px;top:39.400000000000006px;font-size:7.8px">Adobe PDF</div>
</div>
<div id="content" class="abs">
<div id="thumbs" class="abs">
<div class="abs" style="left:8px;top:5px;width:118px;height:68px;border:2px solid #c44a3a;border-radius:1px;background:#eeebe2"></div>
<div class="th abs" style="left:10px;top:7px;width:114px;height:64px;border:none;background:#eeebe2"><i style="left:8px;top:8px;width:30px;height:4px"></i><i style="left:8px;top:8px;width:3.500px;height:40px"></i><i style="left:102.500px;top:16.500px;width:3.500px;height:40px"></i><i style="left:76px;top:52.700px;width:30px;height:3.800px"></i><div class="abs nw" style="left:57px;top:22px;transform:translateX(-50%);font-size:6.500px;line-height:8px;font-weight:bold;color:#1c1b12;-webkit-text-stroke:.2px #1c1b12">郑新民教授团队学术交流</div><div class="abs nw" style="left:57px;top:28px;transform:translateX(-50%);font-size:5.400px;line-height:8px;font-weight:bold;color:#1c1b12;font-family:'Liberation Serif',serif;letter-spacing:.4px">（许昌学院）</div><b style="left:43.500px;top:42.500px;width:27px;background:#b5b2a8"></b><b style="left:51.500px;top:45.500px;width:11px;background:#b5b2a8"></b><b style="left:45px;top:49px;width:24px;background:#a9a69c"></b></div>
<div class="th abs" style="left:11px;top:84.6px;width:113px;height:64px"><i style="left:3.500px;top:1.500px;width:2px;height:61px"></i><div class="abs nw" style="left:12.5px;top:9.5px;font-size:4.8px;line-height:6px;color:#1c1b12;font-family:'Liberation Serif',serif;font-weight:bold;">关于我</div><b style="left:13px;top:22.5px;width:1.200px;height:1.200px;background:#555"></b><b style="left:13px;top:29px;width:1.200px;height:1.200px;background:#555"></b><b style="left:13px;top:35.5px;width:1.200px;height:1.200px;background:#555"></b><b style="left:13px;top:42px;width:1.200px;height:1.200px;background:#555"></b><b style="left:13px;top:46px;width:1.200px;height:1.200px;background:#555"></b><b style="left:16px;top:22.5px;width:84px;background:#b9b6ac"></b><b style="left:16px;top:24.3px;width:12px;background:#b9b6ac"></b><b style="left:16px;top:29.0px;width:86px;background:#b9b6ac"></b><b style="left:16px;top:30.8px;width:80px;background:#b9b6ac"></b><b style="left:16px;top:35.5px;width:85px;background:#b9b6ac"></b><b style="left:16px;top:37.3px;width:30px;background:#b9b6ac"></b><b style="left:16px;top:42.0px;width:60px;background:#b9b6ac"></b><b style="left:16px;top:46.0px;width:86px;background:#b9b6ac"></b><b style="left:16px;top:47.8px;width:84px;background:#b9b6ac"></b><b style="left:16px;top:49.6px;width:40px;background:#b9b6ac"></b></div>
<div class="th abs" style="left:11px;top:162.3px;width:113px;height:64px"><i style="left:3.500px;top:1.500px;width:2px;height:61px"></i><div class="abs nw" style="left:56.5px;top:6px;font-size:4.7px;line-height:6px;color:#1c1b12;font-family:'Liberation Serif',serif;font-weight:bold;transform:translateX(-50%);letter-spacing:.4px">如何撰写文献综述</div><div class="abs nw" style="left:13px;top:18px;font-size:4.5px;line-height:6px;color:#1c1b12;font-family:'Liberation Serif',serif;font-weight:bold;font-weight:normal">提要</div><div class="abs nw" style="left:13px;top:31.5px;font-size:4.3px;line-height:6px;color:#1c1b12;font-family:'Liberation Serif',serif;font-weight:bold;font-weight:normal;letter-spacing:.3px">■概念与内涵</div><div class="abs nw" style="left:13px;top:38.5px;font-size:4.3px;line-height:6px;color:#1c1b12;font-family:'Liberation Serif',serif;font-weight:bold;font-weight:normal;letter-spacing:.3px">■方法及个人体悟</div><div class="abs nw" style="left:13px;top:45.5px;font-size:4.3px;line-height:6px;color:#1c1b12;font-family:'Liberation Serif',serif;font-weight:bold;font-weight:normal;letter-spacing:.3px">■结语</div></div>
<div class="th abs" style="left:11px;top:240.0px;width:113px;height:64px"><i style="left:3.500px;top:1.500px;width:2px;height:61px"></i><div class="abs nw" style="left:12.5px;top:7px;font-size:4.8px;line-height:6px;color:#1c1b12;font-family:'Liberation Serif',serif;font-weight:bold;">概念与内涵</div><b style="left:13px;top:21px;width:1.200px;height:1.200px;background:#555"></b><b style="left:13px;top:31.5px;width:1.200px;height:1.200px;background:#555"></b><b style="left:13px;top:40.5px;width:1.200px;height:1.200px;background:#555"></b><b style="left:16px;top:21.0px;width:42px;background:#b9b6ac"></b><b style="left:16px;top:31.5px;width:88px;background:#b9b6ac"></b><b style="left:16px;top:33.3px;width:80px;background:#b9b6ac"></b><b style="left:16px;top:40.5px;width:88px;background:#b9b6ac"></b><b style="left:16px;top:42.3px;width:20px;background:#b9b6ac"></b></div>
<div class="th abs" style="left:11px;top:317.6px;width:113px;height:64px"><i style="left:3.500px;top:1.500px;width:2px;height:61px"></i><b style="left:13px;top:9.5px;width:1.200px;height:1.200px;background:#555"></b><b style="left:13px;top:17px;width:1.200px;height:1.200px;background:#555"></b><b style="left:13px;top:22px;width:1.200px;height:1.200px;background:#555"></b><b style="left:13px;top:35px;width:1.200px;height:1.200px;background:#555"></b><b style="left:13px;top:39px;width:1.200px;height:1.200px;background:#555"></b><b style="left:13px;top:45px;width:1.200px;height:1.200px;background:#555"></b><b style="left:13px;top:49px;width:1.200px;height:1.200px;background:#555"></b><b style="left:16px;top:9.5px;width:26px;background:#b9b6ac"></b><b style="left:16px;top:17.0px;width:70px;background:#b9b6ac"></b><b style="left:16px;top:22.0px;width:86px;background:#b9b6ac"></b><b style="left:16px;top:23.8px;width:88px;background:#b9b6ac"></b><b style="left:16px;top:25.6px;width:86px;background:#b9b6ac"></b><b style="left:16px;top:27.4px;width:30px;background:#b9b6ac"></b><b style="left:16px;top:35.0px;width:26px;background:#b9b6ac"></b><b style="left:16px;top:39.0px;width:86px;background:#b9b6ac"></b><b style="left:16px;top:40.8px;width:70px;background:#b9b6ac"></b><b style="left:16px;top:45.0px;width:78px;background:#b9b6ac"></b><b style="left:16px;top:49.0px;width:70px;background:#b9b6ac"></b></div>
<div class="th abs" style="left:11px;top:395.3px;width:113px;height:64px"><i style="left:3.500px;top:1.500px;width:2px;height:61px"></i><b style="left:13px;top:10.0px;width:40px;background:#b9b6ac"></b><b style="left:13px;top:15.5px;width:1.200px;height:1.200px;background:#555"></b><b style="left:13px;top:20.5px;width:1.200px;height:1.200px;background:#555"></b><b style="left:13px;top:25.5px;width:1.200px;height:1.200px;background:#555"></b><b style="left:13px;top:36px;width:1.200px;height:1.200px;background:#555"></b><b style="left:16px;top:15.5px;width:18px;background:#b9b6ac"></b><b style="left:16px;top:20.5px;width:18px;background:#b9b6ac"></b><b style="left:16px;top:25.5px;width:18px;background:#b9b6ac"></b><b style="left:16px;top:36.0px;width:88px;background:#b9b6ac"></b><b style="left:16px;top:37.8px;width:86px;background:#b9b6ac"></b><b style="left:16px;top:39.6px;width:70px;background:#b9b6ac"></b></div>
<div class="th abs" style="left:11px;top:473.0px;width:113px;height:64px"><i style="left:3.500px;top:1.500px;width:2px;height:61px"></i></div>
</div>
<div class="abs" style="left:141px;top:3px;width:5px;height:242px;border-radius:3px;background:#bcbcbc"></div>
<div class="abs" style="left:147.500px;top:0;width:4.500px;height:479px;background:#f8f8f8;border-right:1px solid #d9d9d9"></div>
<svg class="abs" style="left:112px;top:88px" width="9" height="15" viewBox="0 0 9 15"><path d="M.500 .500v11.500l2.700-2.500 1.900 4.500 1.900-.800-1.900-4.400h3.600z" fill="#111" stroke="#fff" stroke-width=".7"/></svg>
<div id="slide" class="abs">
<div class="blk abs" style="left:45px;top:45px;width:199px;height:23px"></div>
<div class="blk abs" style="left:45px;top:45px;width:25px;height:266px"></div>
<div class="blk abs" style="left:667px;top:102px;width:25px;height:266px"></div>
<div class="blk abs" style="left:493px;top:345px;width:199px;height:23px"></div>
<div id="s_title" class="abs nw" style="left:369px;top:142px;transform:translateX(-50%);font-size:41.400px;line-height:54px;font-weight:bold;color:#1a1a12;letter-spacing:.45px;text-indent:.45px">郑新民教授团队学术交流</div>
<div id="s_sub" class="abs nw" style="left:369px;top:192px;transform:translateX(-50%);font-size:32.500px;line-height:44px;color:#1a1a12;font-family:'Liberation Serif',serif;letter-spacing:5.400px;text-indent:5.400px;-webkit-text-stroke:.55px #1a1a12">（许昌学院）</div>
<div id="s_l1" class="abs nw" style="left:369.500px;top:270px;transform:translateX(-50%);font-size:14.600px;line-height:22px;color:#22221a;font-family:'Liberation Serif',serif;letter-spacing:1.300px;text-indent:1.300px;-webkit-text-stroke:.25px #22221a">西南林业大学外国语学院</div>
<div id="s_l2" class="abs nw" style="left:369.500px;top:289.500px;transform:translateX(-50%);font-size:14.600px;line-height:22px;color:#22221a;font-family:'Liberation Serif',serif;letter-spacing:1.300px;text-indent:1.300px;-webkit-text-stroke:.25px #22221a">姚洋 博士</div>
<div id="s_l3" class="abs nw" style="left:369px;top:308.500px;transform:translateX(-50%);font-size:15px;line-height:22px;color:#1c1c14;text-decoration:underline wavy #d9534f;text-decoration-thickness:1px;text-underline-offset:2px">yaoyang@swfu.edu.cn</div>
</div>
<div id="notes" class="abs"><div class="abs nw" style="left:6px;top:6px;font-size:9.200px;line-height:14px;color:#2a2a2a;-webkit-text-stroke:.2px #2a2a2a">单击此处添加备注</div></div>
<div class="abs" style="left:1001px;top:194px;width:22px;height:53px;border-radius:5px 0 0 5px;background:#5a5a5c"><svg class="abs" style="left:7px;top:19px" width="8" height="15" viewBox="0 0 8 15" fill="none" stroke="#cfcfcf" stroke-width="1.500"><path d="M1 1l6 6.500L1 14" stroke-linecap="round" stroke-linejoin="round"/></svg></div>
</div>
<div id="status" class="abs">
  <div class="abs nw" style="left:5px;top:1px;font-size:9px;line-height:15px;color:#5a5a5a">幻灯片 2 / 12</div>
  <div class="abs nw" style="left:71.500px;top:1px;font-size:9px;line-height:15px;color:#5a5a5a">中文 (中国)</div>
  <svg class="abs" style="left:684px;top:4px" width="10" height="9" viewBox="0 0 10 9"><path d="M5 0 8 3.500H2z" fill="#666"/><path d="M0 5.500h10M0 8h10" stroke="#666" stroke-width="1.100"/></svg>
  <div class="abs nw" style="left:697.500px;top:1px;font-size:8.800px;line-height:15px;color:#4a4a4a">备注</div>
  <svg class="abs" style="left:729px;top:4px" width="10" height="9" viewBox="0 0 10 9"><path d="M1 0h8a1 1 0 0 1 1 1v4.500a1 1 0 0 1-1 1H5L2.500 9V6.500H1a1 1 0 0 1-1-1V1a1 1 0 0 1 1-1z" fill="#555"/></svg>
  <div class="abs nw" style="left:742px;top:1px;font-size:8.800px;line-height:15px;color:#4a4a4a">批注</div>
  <div class="abs" style="left:767.500px;top:0;width:26px;height:16px;background:#c9c9c9"></div>
  <svg class="abs" style="left:775px;top:3.500px" width="11" height="9" viewBox="0 0 11 9"><rect x=".5" y=".5" width="10" height="8" rx="1" fill="#f2f2f2" stroke="#555" stroke-width=".9"/><rect x="3" y="2.500" width="5" height="2.500" fill="none" stroke="#555" stroke-width=".8"/><path d="M3 6.800h5" stroke="#777" stroke-width=".7"/></svg>
  <svg class="abs" style="left:801px;top:3.500px" width="12" height="9" viewBox="0 0 12 9"><rect x="0" y="0" width="5" height="3.500" fill="#555"/><rect x="6.800" y="0" width="5" height="3.500" fill="#555"/><rect x="0" y="5.300" width="5" height="3.500" fill="#555"/><rect x="6.800" y="5.300" width="5" height="3.500" fill="#555"/></svg>
  <svg class="abs" style="left:826px;top:3px" width="12" height="10" viewBox="0 0 12 10" fill="none" stroke="#555" stroke-width="1"><path d="M0 .500h12M1.200 .500v5.500h9.600V.500M6 6v2.500M3.500 9.500h5"/></svg>
  <div class="abs" style="left:850.500px;top:7px;width:6px;height:1.500px;background:#555"></div>
  <div class="abs" style="left:862px;top:6.500px;width:71px;height:2.500px;border-radius:1.500px;background:#8d8d8d"></div>
  <div class="abs" style="left:894.500px;top:3.500px;width:8.500px;height:8.500px;border-radius:50%;background:#fdfdfd;box-shadow:0 0 1.500px rgba(0,0,0,.55)"></div>
  <svg class="abs" style="left:937.500px;top:4.500px" width="7" height="7" viewBox="0 0 7 7"><path d="M3.500 0v7M0 3.500h7" stroke="#444" stroke-width="1.300"/></svg>
  <div class="abs nw" style="left:956.500px;top:1px;font-size:8.600px;line-height:15px;color:#555">108%</div>
  <svg class="abs" style="left:992px;top:3px" width="10" height="10" viewBox="0 0 10 10" fill="none" stroke="#555" stroke-width=".9"><rect x=".5" y=".5" width="9" height="9" rx=".8"/><path d="M2.200 4V2.200H4M6 2.200h1.800V4M7.800 6v1.800H6M4 7.800H2.200V6"/></svg>
</div>
<div id="desk" class="abs"></div>
<div class="abs" style="left:0;top:637px;width:59px;height:49px;background:radial-gradient(ellipse 14px 7px at 12px 30px,#3d566e 0,transparent 100%),radial-gradient(ellipse 16px 6px at 40px 40px,#38516a 0,transparent 100%),radial-gradient(ellipse 12px 5px at 30px 18px,#1f3043 0,transparent 100%),#2a3c50"></div>
<div class="abs" style="left:952px;top:637px;width:71px;height:49px;background:radial-gradient(ellipse 22px 6px at 30px 12px,#3a536b 0,transparent 100%),radial-gradient(ellipse 26px 7px at 45px 32px,#203144 0,transparent 100%),radial-gradient(ellipse 18px 5px at 15px 42px,#38516a 0,transparent 100%),#2c3e52"></div>
<div id="dock" class="abs"></div>
<div id="deskbot" class="abs"></div>
<svg class="abs" style="left:66.5px;top:645.2px" width="30.0" height="30.0" viewBox="0 0 30 30"><rect x="0" y="0" width="30" height="29" rx="3" fill="#e9f0f7"/><path d="M0 3a3 3 0 0 1 3-3h13c-2 6-3 11-3 16h4c0 5 .5 9 1.500 13H3a3 3 0 0 1-3-3z" fill="#2d8ff0"/><path d="M7 8v3M22 8v3" stroke="#14324f" stroke-width="1.600" stroke-linecap="round"/><path d="M5 19c5 4.500 15 4.500 20 0" fill="none" stroke="#14324f" stroke-width="1.400" stroke-linecap="round"/></svg>
<svg class="abs" style="left:105.0px;top:644.2px" width="32.0" height="32.0" viewBox="0 0 32 32"><defs><linearGradient id="lp" x1="0" y1="0" x2="0" y2="1"><stop offset="0" stop-color="#c9ccd0"/><stop offset="1" stop-color="#76797e"/></linearGradient></defs><circle cx="16" cy="16" r="15.600" fill="url(#lp)" stroke="#d9dbde" stroke-width=".8"/><path d="M22.500 7.500c-4.500.500-8.500 3.500-11 8l-3 .500-2 3 4 .500 2.500 2.500.500 4 3-2 .500-3c4.500-2.500 7-6.500 7.500-11.500z" fill="#3b3d41"/><circle cx="18.500" cy="12.500" r="1.700" fill="#9a9da2"/><path d="M9 22l-3 4 4-2z" fill="#3b3d41"/></svg>
<svg class="abs" style="left:144.2px;top:644.2px" width="32.0" height="32.0" viewBox="0 0 32 32"><defs><linearGradient id="sf" x1="0" y1="0" x2="0" y2="1"><stop offset="0" stop-color="#39b6f7"/><stop offset="1" stop-color="#1c62e0"/></linearGradient></defs><circle cx="16" cy="16" r="15.600" fill="#f2f4f7"/><circle cx="16" cy="16" r="13.800" fill="url(#sf)"/><g stroke="#d9ecff" stroke-width=".5" opacity=".8"><path d="M16 3v3M16 26v3M3 16h3M26 16h3M6.800 6.800l2 2M23.200 23.200l-2-2M6.800 25.200l2-2M25.200 6.800l-2 2"/></g><path d="M24.500 7.500 14 14l4 4z" fill="#f2413a"/><path d="M7.500 24.500 14 14l4 4z" fill="#f7f7f7"/></svg>
<div class="abs" style="left:80.0px;top:681.7px;width:2px;height:2px;border-radius:50%;background:#111"></div>
<div class="abs" style="left:159.2px;top:681.7px;width:2px;height:2px;border-radius:50%;background:#111"></div>
<svg class="abs" style="left:184.8px;top:645.2px" width="30.0" height="30.0" viewBox="0 0 30 30"><g transform="rotate(-8 15 15)"><rect x="2.500" y="1" width="25" height="28" rx="1.500" fill="#fbfaf2" stroke="#d8d3bd" stroke-width=".6"/><rect x="2.500" y="1" width="25" height="5.500" rx="1.500" fill="#f7cf46"/><path d="M4.500 10h21M4.500 13h21M4.500 16h21M4.500 19h21M4.500 22h21M4.500 25h21" stroke="#e3dfd0" stroke-width=".7"/></g></svg>
<svg class="abs" style="left:223.2px;top:645.2px" width="31.0" height="30.0" viewBox="0 0 31 30"><g transform="rotate(-8 13 14)"><rect x="1" y="1.500" width="24" height="25" rx="1" fill="#151416"/><path d="M4 14h2l1-4 1.200 8 1.300-11 1.300 13 1.200-9 1 5 1-2h1.500" fill="none" stroke="#e2322e" stroke-width="1.300"/><path d="M14.500 4v20" stroke="#5cc0f2" stroke-width="1"/><path d="M15 14h9" stroke="#bbb" stroke-width="1.200"/></g><circle cx="22.500" cy="22" r="6.800" fill="#e0242b"/><rect x="21" y="17.500" width="3" height="6" rx="1.500" fill="#8a1217"/><path d="M19.500 22a3 3 0 0 0 6 0M22.500 25v1.500" fill="none" stroke="#8a1217" stroke-width=".9"/></svg>
<svg class="abs" style="left:263.7px;top:644.7px" width="30.0" height="31.0" viewBox="0 0 30 31"><defs><linearGradient id="sp" x1="0" y1="0" x2="0" y2="1"><stop offset="0" stop-color="#c3c6ca"/><stop offset="1" stop-color="#7d8084"/></linearGradient></defs><rect x="0" y="2" width="30" height="28.500" rx="3" fill="url(#sp)"/><circle cx="15" cy="16.200" r="12" fill="#35373a"/><circle cx="15" cy="16.200" r="9.600" fill="none" stroke="#b9bcc1" stroke-width="3" stroke-dasharray="2.500 2.520"/><circle cx="15" cy="16.200" r="8.300" fill="none" stroke="#b9bcc1" stroke-width="2"/><circle cx="15" cy="16.200" r="7" fill="#4b4d51"/><path d="M15 16.200V9M15 16.200l6.200 3.600M15 16.200l-6.200 3.600" stroke="#c3c6ca" stroke-width="1.900"/><circle cx="15" cy="16.200" r="2.200" fill="#c3c6ca"/><circle cx="15" cy="16.200" r=".9" fill="#35373a"/></svg>
<div class="abs" style="left:285.8px;top:641.6px;width:12px;height:12px;border-radius:50%;background:#f0413a;color:#fff;font-size:8px;line-height:12px;text-align:center">1</div>
<svg class="abs" style="left:302.9px;top:644.2px" width="32.0" height="32.0" viewBox="0 0 32 32"><rect x="0" y="0" width="32" height="32" rx="6.500" fill="#e0112d"/><circle cx="16" cy="17" r="9.300" fill="none" stroke="#fff" stroke-width="2.200"/><circle cx="16" cy="17.500" r="3.800" fill="none" stroke="#fff" stroke-width="2"/><path d="M19.300 19V7.500c0-1.500 2-2 3.500-1" fill="none" stroke="#fff" stroke-width="2" stroke-linecap="round"/><rect x="19" y="4" width="8" height="6" fill="#e0112d" opacity="0"/></svg>
<svg class="abs" style="left:341.8px;top:644.2px" width="32.0" height="32.0" viewBox="0 0 32 32"><ellipse cx="11.500" cy="12" rx="11.500" ry="10" fill="#2fcb5a"/><path d="M5.500 20l-1 4.500 5-3z" fill="#2fcb5a"/><circle cx="7.800" cy="9" r="1.300" fill="#1f9943"/><circle cx="15" cy="9" r="1.300" fill="#1f9943"/><ellipse cx="22.500" cy="20.500" rx="9.500" ry="8.300" fill="#e9e9e9"/><path d="M27.500 27l1.300 3.500-4.300-2z" fill="#e9e9e9"/><circle cx="19.500" cy="18.500" r="1.100" fill="#9a9a9a"/><circle cx="25.500" cy="18.500" r="1.100" fill="#9a9a9a"/></svg>
<svg class="abs" style="left:381.0px;top:642.1px" width="33.0" height="36.3" viewBox="0 0 30 33"><ellipse cx="15" cy="15" rx="9.300" ry="12.500" fill="#111"/><ellipse cx="4.500" cy="20" rx="3" ry="5.500" fill="#111" transform="rotate(18 4.500 20)"/><ellipse cx="25.500" cy="20" rx="3" ry="5.500" fill="#111" transform="rotate(-18 25.500 20)"/><ellipse cx="15" cy="22" rx="6.800" ry="7.800" fill="#fbfbfb"/><ellipse cx="12.300" cy="7.800" rx="2" ry="2.700" fill="#fff"/><ellipse cx="17.700" cy="7.800" rx="2" ry="2.700" fill="#fff"/><circle cx="12.800" cy="8.200" r=".9" fill="#111"/><circle cx="17.200" cy="8.200" r=".9" fill="#111"/><ellipse cx="15" cy="12.300" rx="4.300" ry="1.700" fill="#f5a623"/><path d="M5.500 14.500c5 2.800 14 2.800 19 0l1 3.200c-6 3-15 3-21 0z" fill="#e0242b"/><path d="M8.500 17.500h3.500V24H9z" fill="#e0242b"/><ellipse cx="9.500" cy="30" rx="4.500" ry="1.800" fill="#f5a623"/><ellipse cx="20.500" cy="30" rx="4.500" ry="1.800" fill="#f5a623"/></svg>
<svg class="abs" style="left:421.3px;top:644.2px" width="32.0" height="32.0" viewBox="0 0 32 32"><circle cx="16" cy="16" r="16" fill="#3296fa"/><path d="M7.500 7.500c5 1.500 11 3.500 16.500 4-1 3-2.500 5-3.500 6.500h3L17 27l1.500-5.500h-3l2-3c-3-.500-5.500-2-7-4.500 1.500.700 3.500 1 5 1-3-1.200-5.500-3.200-6.500-5.500 1.800 1 4 1.700 5.800 1.900C12.300 10.300 9.300 9 7.500 7.500z" fill="#fff"/></svg>
<div class="abs" style="left:460.2px;top:644.2px;width:32px;height:32px;border-radius:50%;background:#e0112d;color:#fff;font-size:20px;line-height:32px;text-align:center;font-weight:bold">邮</div>
<div class="abs nw" style="left:499.7px;top:642.7px;width:34px;height:35px;border-radius:6px;background:linear-gradient(#f02240,#d60d2b);color:#fff;font-size:14.500px;line-height:35px;text-align:center;font-weight:bold;letter-spacing:-.5px">有道</div>
<svg class="abs" style="left:540.6px;top:643.7px" width="30.0" height="33.0" viewBox="0 0 30 33"><g transform="rotate(-10 15 16)"><rect x="4" y="1.500" width="22" height="29" rx="1.500" fill="#1c1d20" stroke="#a9acb1" stroke-width="1.400"/><circle cx="15" cy="13" r="8" fill="#aeb3ba"/><path d="M15 13 9 7.500M15 13l7-4M15 13v8" stroke="#dfe3e8" stroke-width="1.200" opacity=".8"/><circle cx="15" cy="13" r="1.300" fill="#55585c"/><rect x="11.500" y="24" width="7" height="3" rx=".8" fill="#9a9da2"/></g></svg>
<svg class="abs" style="left:578.2px;top:644.2px" width="34.0" height="32.0" viewBox="0 0 34 32"><defs><radialGradient id="sg" cx=".38" cy=".3" r=".75"><stop offset="0" stop-color="#b59084"/><stop offset=".55" stop-color="#7b5a50"/><stop offset="1" stop-color="#3f2c28"/></radialGradient><radialGradient id="sg2" cx=".5" cy=".5" r=".5"><stop offset="0" stop-color="#ffd86b"/><stop offset=".5" stop-color="#f08a24"/><stop offset="1" stop-color="#f08a24" stop-opacity="0"/></radialGradient></defs><circle cx="18" cy="16" r="15.500" fill="url(#sg)"/><circle cx="20" cy="20" r="7" fill="url(#sg2)"/><path d="M0 17l13-3.500 2 8L2 25z" fill="#f1efe9"/><path d="M1 20l13-3.500M1.500 22.500l13-3.500" stroke="#c9c5bb" stroke-width=".7"/></svg>
<svg class="abs" style="left:618.5px;top:645.2px" width="32.0" height="30.0" viewBox="0 0 32 30"><rect x="9" y="0" width="23" height="30" rx="2.500" fill="#2b7cd3"/><rect x="9" y="0" width="23" height="8" rx="2.500" fill="#41a5ee"/><rect x="9" y="15" width="23" height="7.500" fill="#185abd"/><rect x="9" y="22" width="23" height="8" rx="2.500" fill="#103f91"/><rect x="0" y="6" width="18" height="18" rx="2" fill="#185abd"/><text x="3.200" y="20" font-size="13.500" font-weight="bold" fill="#fff" font-family="Liberation Sans">W</text></svg>
<svg class="abs" style="left:656.3px;top:644.7px" width="34.0" height="31.0" viewBox="0 0 34 31"><circle cx="19" cy="15.500" r="15" fill="#ed6c47"/><path d="M19 .500a15 15 0 0 1 15 15H19z" fill="#ff8f6b"/><path d="M19 30.500a15 15 0 0 1-13-7.500h26a15 15 0 0 1-13 7.500z" fill="#d35230"/><rect x="0" y="6" width="18" height="18" rx="2" fill="#c43e1c"/><text x="4.800" y="20" font-size="13.500" font-weight="bold" fill="#fff" font-family="Liberation Sans">P</text></svg>
<svg class="abs" style="left:696.5px;top:643.7px" width="33.0" height="33.0" viewBox="0 0 33 33"><rect x="0" y="0" width="33" height="33" rx="7" fill="#2b74ff"/><path d="M3.500 21.500 11 10l5 7.500 3.500-5.500 10 13.500H20l-3.500-4.500-3 4.500z" fill="#fff"/><path d="M3.500 21.500 11 10l4 6-6 9.500z" fill="#dce8ff"/></svg>
<svg class="abs" style="left:736.2px;top:643.7px" width="33.0" height="33.0" viewBox="0 0 33 33"><defs><linearGradient id="pd" x1="0" y1="0" x2="0" y2="1"><stop offset="0" stop-color="#d3202a"/><stop offset="1" stop-color="#8f0f17"/></linearGradient></defs><rect x="0" y="0" width="33" height="33" rx="6.500" fill="url(#pd)"/><ellipse cx="16.500" cy="16" rx="14.500" ry="11" fill="none" stroke="#ff6a6f" stroke-width="1" opacity=".7"/><text x="3.500" y="21.500" font-size="13" font-weight="bold" font-style="italic" fill="#fff" font-family="Liberation Sans">PDF</text></svg>
<div class="abs" style="left:672.3px;top:681.7px;width:2px;height:2px;border-radius:50%;background:#111"></div>
<div class="abs" style="left:712.0px;top:681.7px;width:2px;height:2px;border-radius:50%;background:#111"></div>
<div class="abs" style="left:751.7px;top:681.7px;width:2px;height:2px;border-radius:50%;background:#111"></div>
<div class="abs" style="left:781.500px;top:644px;width:1px;height:36px;background:#4e5f73"></div>
<svg class="abs" style="left:792.0px;top:648.0px" width="34.0" height="28.0" viewBox="0 0 34 28"><rect x="0" y="2" width="34" height="25" rx="2" fill="#6fd0f2"/><rect x="0" y="0" width="14" height="6" rx="1.500" fill="#6fd0f2"/><circle cx="17" cy="15" r="6.500" fill="#52b4de"/><path d="M17 11.500v6M14.300 15l2.700 3 2.700-3" fill="none" stroke="#7fd8f5" stroke-width="1.600"/></svg>
<svg class="abs" style="left:831.8px;top:648.0px" width="34.0" height="28.0" viewBox="0 0 34 28"><rect x="0" y="2" width="34" height="25" rx="2" fill="#6fd0f2"/><rect x="0" y="0" width="14" height="6" rx="1.500" fill="#6fd0f2"/><path d="M12.500 8h6l3.500 3.500V21h-9.500z" fill="none" stroke="#4fb3dc" stroke-width="1.300"/></svg>
<svg class="abs" style="left:874.8px;top:649.5px" width="29.0" height="26.0" viewBox="0 0 29 26"><rect x="-2" y="-1" width="33" height="23" fill="#f3f3f3" stroke="#d6d6d6" stroke-width=".5"/><g stroke="#9a9a9a" stroke-width="1"><path d="M5 4h18M4 6.500h20M5 9h18M4 11.500h20M5 14h16M5 16.500h14"/></g><rect x="18" y="15" width="10.500" height="10.500" rx="2" fill="#c4161f"/><text x="19.200" y="22.300" font-size="4.200" font-weight="bold" fill="#fff" font-family="Liberation Sans">PDF</text></svg>
<svg class="abs" style="left:916.4px;top:643.5px" width="26.0" height="33.0" viewBox="0 0 26 33"><path d="M1.500 4h23l-2.700 27a2 2 0 0 1-2 1.800h-13.600a2 2 0 0 1-2-1.800z" fill="#e4e8ec" opacity=".92"/><ellipse cx="13" cy="4" rx="11.500" ry="3" fill="#f7f9fb" stroke="#c8ccd1" stroke-width=".6"/><path d="M7 8l1.300 21M13 8v21M19 8l-1.300 21" stroke="#c9ced4" stroke-width=".8"/></svg>
<div class="abs nw" style="left:645px;top:633px;width:324px;height:19px;background:rgba(54,196,228,.78);color:#2a5563;font-size:15.400px;line-height:19px"><span class="abs" style="left:28px;top:0;font-size:15.200px">捕捉图像<span style="font-size:16.500px">(C)</span></span><span class="abs" style="left:130.500px;top:0;font-size:16.600px;letter-spacing:-.35px">&lt;CTRL&gt;&lt;SHIFT&gt;&lt;C&gt;</span></div>
<div class="abs" style="left:4px;top:624px;width:112px;height:40px;border-radius:20px;background:rgba(40,42,46,.62)"><svg class="abs" style="left:11.500px;top:8.500px" width="22" height="22" viewBox="0 0 22 22"><circle cx="11" cy="11" r="10.500" fill="#9d9fa2"/><circle cx="7.300" cy="8" r="1.600" fill="#3f4144"/><circle cx="14.700" cy="8" r="1.600" fill="#3f4144"/><path d="M4.800 11.500h12.400a6.200 6.200 0 0 1-12.400 0z" fill="#3f4144"/></svg><svg class="abs" style="left:44.500px;top:10px" width="20" height="19" viewBox="0 0 20 19"><path d="M1.500 0h14A1.500 1.500 0 0 1 17 1.500V12H1.500A1.500 1.500 0 0 1 0 10.500v-9A1.500 1.500 0 0 1 1.500 0z" fill="#a4a6a9"/><path d="M10 9h9v7l1 3-4-2.500h-6z" fill="#8f9194"/><circle cx="4.300" cy="6" r="1.300" fill="#3f4144"/><circle cx="8.500" cy="6" r="1.300" fill="#3f4144"/><circle cx="12.700" cy="6" r="1.300" fill="#3f4144"/></svg><svg class="abs" style="left:86px;top:12.500px" width="8" height="13" viewBox="0 0 8 13" fill="none" stroke="#b9bbbe" stroke-width="1.300"><path d="M7 .800 1.200 6.500 7 12.200" stroke-linecap="round" stroke-linejoin="round"/></svg></div>
</div>
<div id="side" class="abs">
<div class="abs" style="left:0;top:0;width:234px;height:210px;background:linear-gradient(rgba(8,8,9,1) 0,rgba(8,8,9,.94) 35px,rgba(10,10,11,.6) 110px,rgba(10,10,11,0) 210px)"></div>
<svg class="abs" style="left:104.5px;top:15px" width="25" height="15" viewBox="0 0 25 15"><path d="M12.500 .500 24.300 14a.6.6 0 0 1-.5 1H1.200a.6.6 0 0 1-.5-1z" fill="#8b8b8d"/></svg>
<div class="card abs" style="top:39.6px;background:linear-gradient(#111112,#1a1a1c 55%,#202022);border-color:#2b2c2f #2c2d30 #3c3d41 #3a3b40"><div class="av abs" style="background:#1b1b1c;overflow:hidden"><svg width="67" height="67" viewBox="0 0 66 66"><defs><filter id="bl"><feGaussianBlur stdDeviation=".7"/></filter></defs><g filter="url(#bl)"><rect width="66" height="66" fill="#262627"/><path d="M0 0h66v20H0z" fill="#3d3d3e"/><path d="M28.500 0h3.500v22h-3.500z" fill="#585859"/><path d="M10 6 20 16M56 6 46 16" stroke="#505051" stroke-width="1.500"/><path d="M2 13h54v7H2z" fill="#5e5e5f"/><path d="M0 20 10 21 28 27v5L12 28 0 24z" fill="#a2a2a3"/><path d="M9 22.500 28 21.500v3L12 26z" fill="#7d7d7e"/><path d="M30 22h29v3.500L31 27z" fill="#6c6c6d"/><path d="M31 28.500 60 26v4L44 33l-13 .5z" fill="#8f8f90"/><path d="M43 33.500 60 30v3.500L44 37z" fill="#666667"/><path d="M58 18h8v34h-7z" fill="#454546"/><path d="M0 26h13v30H0z" fill="#19191a"/><path d="M13 33h4v23h-4z" fill="#4e4e4f"/><path d="M17 36h10v20H17z" fill="#222223"/><path d="M28.500 27h2.500v24h-2.500z" fill="#39393a"/><path d="M28 44h8v12h-8z" fill="#d2d2d3"/><path d="M36 36h4v20h-4z" fill="#343435"/><path d="M40 42h4v14h-4z" fill="#8a8a8b"/><path d="M44 40h5v16h-5z" fill="#c4c4c5"/><path d="M49 36h4v20h-4z" fill="#2b2b2c"/><path d="M53 41h5v14h-5z" fill="#cdcdce"/><path d="M58 40h3v15h-3z" fill="#2d2d2e"/><path d="M0 55h66v11H0z" fill="#6b6b6c"/><path d="M14 57h40v5H14z" fill="#8b8b8c"/><path d="M0 62h66v4H0z" fill="#4f4f50"/><rect x="30.200" y="47" width="2.600" height="15" rx="1" fill="#0c0c0c"/><circle cx="31.500" cy="46" r="1.500" fill="#0c0c0c"/></g></svg></div><div class="nm abs" style="left:1px;top:89.5px;width:188px;height:26.5px;padding:0"><svg class="abs" style="left:1.500px;top:4px" width="19" height="20" viewBox="0 0 19 20"><rect x="0" y="0" width="19" height="14" rx="2" fill="#e6e6e6"/><path d="M4.500 10.500c.500-3 2.500-4.500 5.500-4.500V3.500L14.500 7 10 10.500V8.300c-2.500 0-4 .700-5.500 2.200z" fill="#222"/><path d="M5 18.500h9" stroke="#e6e6e6" stroke-width="2.200" stroke-linecap="round"/></svg><svg class="abs" style="left:29px;top:3px" width="18" height="21" viewBox="0 0 18 21"><rect x="5.300" y=".5" width="7.400" height="12.500" rx="3.700" fill="#3bd13f"/><path d="M2.300 9.500a6.700 6.700 0 0 0 13.400 0" fill="none" stroke="#dcdcdc" stroke-width="1.700"/><path d="M9 16.500v3" stroke="#dcdcdc" stroke-width="1.700"/><path d="M5.500 19.800h7" stroke="#dcdcdc" stroke-width="1.600" stroke-linecap="round"/></svg><div class="abs nw" style="left:54.500px;top:0;font-size:14.300px;line-height:26px;color:#ececec">姚洋 西南林业大学...</div></div></div>
<div class="card abs" style="top:170.8px;"><div class="av abs" style="background:#0b79ff;color:#fff">指导</div><div class="nm abs" style="left:1px;top:89.5px;width:190px;height:26.5px;padding:0"><svg class="abs" style="left:8px;top:3.5px" width="18" height="20" viewBox="0 0 18 20"><rect x="5.800" y="1" width="6.400" height="11" rx="3.200" fill="#e4e4e4"/><path d="M2.800 9.500a6.200 6.200 0 0 0 12.400 0" fill="none" stroke="#e4e4e4" stroke-width="1.500"/><path d="M9 15.700v2.500M6 18.600h6" stroke="#e4e4e4" stroke-width="1.500"/><path d="M1 17.500 17 2.500" stroke="#e0524a" stroke-width="1.700"/></svg><div class="abs nw" style="left:33px;top:0;font-size:14.300px;line-height:26px;color:#ececec;letter-spacing:-.05px">许昌学院郑新民教授团...</div></div></div>
<div class="card abs" style="top:302.2px;"><div class="av abs" style="overflow:hidden;background:#6d7f2e"><svg width="66" height="66" viewBox="0 0 66 66"><defs><linearGradient id="eg" x1="0" y1="0" x2="1" y2="0"><stop offset="0" stop-color="#b9b5a0"/><stop offset=".35" stop-color="#8d9446"/><stop offset="1" stop-color="#5f7a22"/></linearGradient></defs><rect width="66" height="66" fill="url(#eg)"/><path d="M0 0h22L14 30 0 36z" fill="#d9d2c4" opacity=".8"/><path d="M0 38 30 34 66 42V66H0z" fill="#b6b9a8" opacity=".85"/><path d="M8 52h40l-6 14H12z" fill="#8d6f3c" opacity=".75"/><path d="M30 40l30 2-8 14-22 2z" fill="#dfe3d6" opacity=".55"/><path d="M2 27c8-6 22-7 30-2l6 3c2 1 2.500 3 1 4.500-6 1-20 1-30-2z" fill="#f5f6f8"/><path d="M36 28l5 6-3 .5z" fill="#4a4638"/><path d="M16 33l-3 10 4 6M19 33l-2 9" stroke="#1c1c1c" stroke-width="1.100" fill="none"/><path d="M14 52l6 8" stroke="#55584a" stroke-width="1" opacity=".7"/></svg></div><div class="nm abs" style="left:2px;top:89.0px;width:118px;height:26.5px;padding:0"><div class="abs" style="left:0;top:0;width:27px;height:26.500px;background:#ff8a1c"><svg class="abs" style="left:4px;top:4px" width="19" height="19" viewBox="0 0 19 19"><circle cx="9.500" cy="5.500" r="4" fill="#fff"/><path d="M0 19c0-5.500 3.500-8 6-8.500l3.500 2.500L13 10.500c2.500.500 6 3 6 8.500z" fill="#fff"/></svg></div><svg class="abs" style="left:36.5px;top:3.5px" width="18" height="20" viewBox="0 0 18 20"><rect x="5.800" y="1" width="6.400" height="11" rx="3.200" fill="#e4e4e4"/><path d="M2.800 9.500a6.200 6.200 0 0 0 12.400 0" fill="none" stroke="#e4e4e4" stroke-width="1.500"/><path d="M9 15.700v2.500M6 18.600h6" stroke="#e4e4e4" stroke-width="1.500"/><path d="M1 17.500 17 2.500" stroke="#e0524a" stroke-width="1.700"/></svg><div class="abs nw" style="left:62px;top:0;font-size:14.300px;line-height:27px;color:#ececec">西蒙<span style="font-size:9px;position:relative;top:-5px;letter-spacing:.3px;font-weight:bold">2020</span></div></div></div>
<div class="card abs" style="top:433.8px;"><div class="av abs" style="background:#0b79ff;color:#fff">丹丹</div><div class="nm abs" style="left:1px;top:90.0px;width:80px;height:26px;padding:0"><svg class="abs" style="left:7px;top:3.5px" width="18" height="20" viewBox="0 0 18 20"><rect x="5.800" y="1" width="6.400" height="11" rx="3.200" fill="#e4e4e4"/><path d="M2.800 9.500a6.200 6.200 0 0 0 12.400 0" fill="none" stroke="#e4e4e4" stroke-width="1.500"/><path d="M9 15.700v2.500M6 18.600h6" stroke="#e4e4e4" stroke-width="1.500"/><path d="M1 17.500 17 2.500" stroke="#e0524a" stroke-width="1.700"/></svg><div class="abs nw" style="left:32.500px;top:0;font-size:14.300px;line-height:26px;color:#ececec">刘丹丹</div></div></div>
<div class="card abs" style="top:565.2px;"><div class="av abs" style="background:#0c62d8;color:#c9d6e8">艳红</div><div class="nm abs" style="left:1px;top:90.0px;width:80px;height:26px;padding:0"><svg class="abs" style="left:7px;top:3.5px" width="18" height="20" viewBox="0 0 18 20"><rect x="5.800" y="1" width="6.400" height="11" rx="3.200" fill="#8f8f8f"/><path d="M2.800 9.500a6.200 6.200 0 0 0 12.400 0" fill="none" stroke="#8f8f8f" stroke-width="1.500"/><path d="M9 15.700v2.500M6 18.600h6" stroke="#8f8f8f" stroke-width="1.500"/><path d="M1 17.500 17 2.500" stroke="#a8433d" stroke-width="1.700"/></svg><div class="abs nw" style="left:32.500px;top:0;font-size:14.300px;line-height:26px;color:#9a9a9a">马艳红</div></div></div>
<div class="abs" style="left:0;top:560px;width:233px;height:130px;background:linear-gradient(rgba(10,10,11,0),rgba(10,10,11,.38))"></div>
<svg class="abs" style="left:104.5px;top:670px" width="25" height="16" viewBox="0 0 25 16"><path d="M12.500 15.500 .700 2a.6.6 0 0 1 .5-1h22.600a.6.6 0 0 1 .5 1z" fill="#fdfdfd"/></svg>
</div>
<div id="bottomstrip" class="abs"></div>
</body>
</html>
